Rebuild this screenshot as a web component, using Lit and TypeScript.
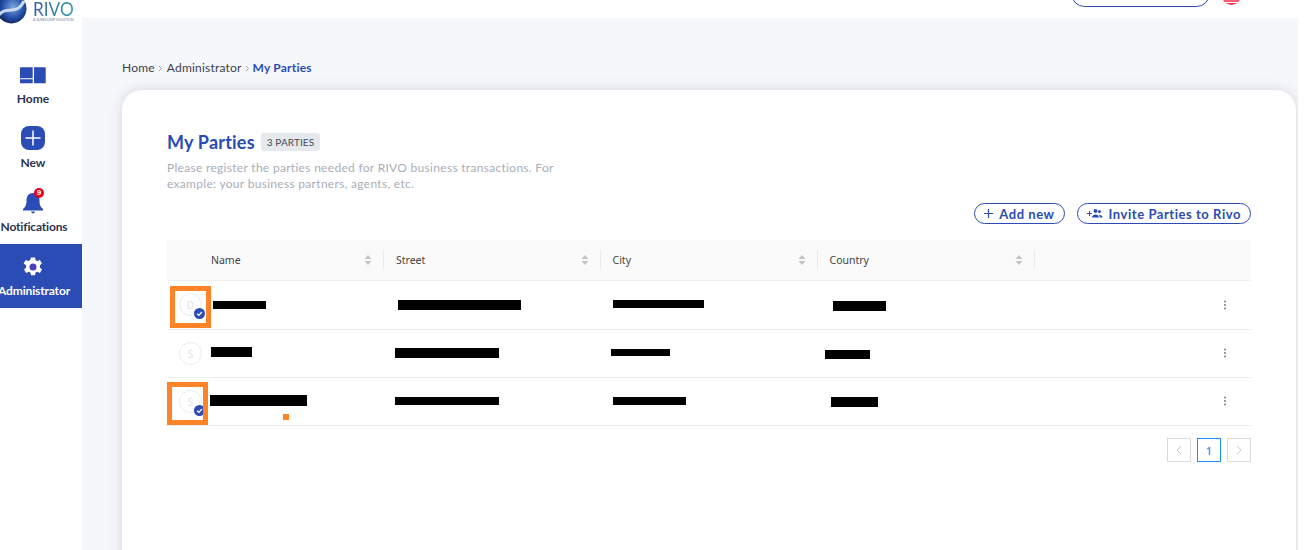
import { LitElement, html, css, svg } from "lit";
import { customElement } from "lit/decorators.js";

const sort = html`<svg class="sort" width="8" height="12" viewBox="0 0 8 12"><path d="M4 1 7.500 5H.5z" fill="#c4c4c4"/><path d="M4 11 .5 7h7z" fill="#c4c4c4"/></svg>`;
const dots = html`<svg class="dots" width="4" height="10" viewBox="0 0 4 10"><circle cx="2" cy="1.500" r="1.100"/><circle cx="2" cy="5" r="1.100"/><circle cx="2" cy="8.500" r="1.100"/></svg>`;
const check = svg`<circle cx="6" cy="6" r="6" fill="#2b4bb5"/><path d="M3.400 6.200 5.300 8 8.700 4.400" fill="none" stroke="#fff" stroke-width="1.400"/>`;
const chevron = html`<svg width="5" height="7" viewBox="0 0 5 7"><path d="M1 1l2.500 2.500L1 6" fill="none" stroke="#9aa0ad"/></svg>`;

type Bar = [number, number, number, number];
interface Row { l: string; tall: boolean; mark: boolean; name: Bar; street: Bar; city: Bar; country: Bar; }
const rows: Row[] = [
  { l: "D", tall: true, mark: true, name: [213, 53, 20, 8], street: [398, 123, 19, 10], city: [613, 91, 19, 8], country: [833, 53, 20, 10] },
  { l: "S", tall: false, mark: false, name: [211, 41, 17, 10], street: [395, 104, 18, 10], city: [611, 59, 19, 7], country: [825, 45, 20, 9] },
  { l: "S", tall: false, mark: true, name: [210, 97, 17, 11], street: [395, 104, 19, 8], city: [613, 73, 19, 8], country: [831, 47, 19, 10] },
];

@customElement("app-root")
export class AppRoot extends LitElement {
  static styles = css`
    :host { display: block; width: 1305px; height: 550px; overflow: hidden; position: relative; background: #fff;
      font-family: "Lato", "Noto Sans", sans-serif; color: #333; }
    .top { height: 18px; position: relative; z-index: 2; background: #fff; }
    .logo { position: absolute; left: -4px; top: -7px; display: block; }
    .brand { position: absolute; left: 33px; top: 0; font-size: 20px; line-height: 17px; font-weight: 400; transform: scaleX(.86); transform-origin: left center;
      background: linear-gradient(90deg, #3d5ca8, #2f9d9f); -webkit-background-clip: text; background-clip: text; color: transparent; }
    .tagline { position: absolute; left: 33px; top: 18px; font-size: 3.500px; line-height: 4px; color: #6f83a6; white-space: nowrap; }
    .pill-top { position: absolute; left: 1071px; top: -20px; width: 137px; height: 25px; border: 1px solid #2b4bb5; border-radius: 14px; }
    .flag { position: absolute; left: 1222px; top: -14px; width: 19px; height: 19px; border-radius: 50%;
      background: linear-gradient(#f0606f 0 16px, #fff 16px 17.500px, #f0404f 17.500px); }
    .body { display: flex; height: 532px; }
    .side { width: 82px; flex: none; background: #fff; padding-top: 34px; box-sizing: border-box; position: relative; z-index: 1; }
    .nav { position: relative; height: 64px; display: flex; flex-direction: column; align-items: center; box-sizing: border-box; padding: 10px 16px 0 0; font-size: 12px; font-weight: 700; color: #2a3350; white-space: nowrap; }
    .nav svg.ico { display: block; height: 26px; margin-bottom: 3px; flex: none; }
    .nav span { line-height: 15px; }
    .nav span.wide { margin-left: 2px; letter-spacing: -.15px; }
    .nav.active { background: #2b4bb5; color: #fff; }
    .badge9 { position: absolute; left: 34px; top: 8px; width: 10px; height: 10px; border-radius: 50%; background: #e8001f; color: #fff; font-size: 8px; line-height: 10px; text-align: center; font-family: "Liberation Sans", sans-serif; }
    .main { width: 1216px; flex: none; background: #f6f7fb; padding: 40px 0 0 40px; box-sizing: border-box; overflow: hidden; }
    .crumbs { display: flex; align-items: center; font-size: 12px; line-height: 20px; height: 20px; letter-spacing: .2px; color: #3a3f4b; }
    .crumbs svg { margin: 0 3.500px; }
    .crumbs b { color: #2b4bb5; font-weight: 700; margin-left: -1px; }
    .card { margin-top: 12px; width: 1174px; height: 520px; background: #fff; border-radius: 20px 20px 0 0; box-shadow: 0 0 14px rgba(60,65,90,.16); padding: 40px 45px 0 45px; box-sizing: border-box; }
    .head { display: flex; align-items: center; gap: 6px; height: 24px; }
    h1 { margin: 0; font-size: 18px; font-weight: 700; color: #2b4bb5; line-height: 24px; letter-spacing: .2px; }
    .badge { background: #e5e8ec; border-radius: 3px; font-size: 10px; line-height: 18px; height: 18px; padding: 0 6px; color: #444b57; letter-spacing: .1px; }
    .desc { margin: 6px 0 0; width: 400px; font-size: 12px; line-height: 16px; color: #a9adb8; letter-spacing: .3px; }
    .actions { display: flex; justify-content: flex-end; gap: 12px; margin-top: 11px; height: 21px; }
    .btn { display: flex; align-items: center; gap: 6px; height: 21px; box-sizing: border-box; border: 1px solid #2b4bb5; border-radius: 11px; padding: 0 9px; font-size: 13px; font-weight: 700; color: #2b4bb5; letter-spacing: .55px; white-space: nowrap; }
    .table { margin-top: 16px; width: 1084px; }
    .grid { display: grid; grid-template-columns: 217px 216.500px 217px 217.500px 1fr; }
    .thead { height: 41px; background: #fafafa; border-bottom: 1px solid #efefef; box-sizing: border-box; font-family: "Noto Sans", sans-serif; font-size: 10.500px; color: #444; }
    .th { display: flex; align-items: center; justify-content: space-between; position: relative; padding: 0 12px; box-sizing: border-box; }
    .th:first-child { padding-left: 44px; }
    .th::after { content: ""; position: absolute; right: 0; top: 10px; height: 19px; width: 1px; background: #e9e9e9; }
    .th.last::after { display: none; }
    .row { height: 48px; border-bottom: 1px solid #ececec; box-sizing: border-box; position: relative; }
    .row.tall { height: 49px; }
    .cell { position: relative; }
    .avatar { position: absolute; left: 12px; top: 12px; width: 23px; height: 23px; box-sizing: border-box; border: 1px solid #e8ebf4; border-radius: 50%; display: flex; align-items: center; justify-content: center; color: #dfe2ee; font-size: 10px; font-family: "Noto Sans", sans-serif; }
    .ok { position: absolute; left: 27px; top: 27px; }
    .redact { position: absolute; background: #000; }
    .more { position: absolute; left: 1056px; top: 18px; }
    .row.tall .more { top: 19px; }
    .dots { fill: #85888f; display: block; }
    .mark { position: absolute; border: 5px solid #ff8427; box-sizing: border-box; pointer-events: none; z-index: 3; }
    .mark.one { left: 170px; top: 286px; width: 41px; height: 42px; }
    .mark.two { left: 167px; top: 382px; width: 41px; height: 43px; }
    .dot { position: absolute; left: 283px; top: 414px; width: 6px; height: 6px; background: #ff8427; z-index: 3; }
    .pager { display: flex; justify-content: flex-end; gap: 6px; margin-top: 12px; }
    .pg { width: 24px; height: 24px; box-sizing: border-box; border: 1px solid #d9d9d9; display: flex; align-items: center; justify-content: center; font-size: 11px; color: #1890ff; font-family: "Noto Sans", sans-serif; font-weight: 500; }
    .pg.on { border-color: #1890ff; }
  `;

  private icon(name: string) {
    if (name === "home") return html`<svg class="ico" width="26" height="26" viewBox="0 0 26 26"><path fill="#2b4bb5" d="M.6 5.300h12.100v11H0V5.900q0-.6.6-.6zM0 17.300h12.700v4H.6q-.6 0-.6-.6zM14 5.300h11.100q.6 0 .6.6v14.800q0 .6-.6.6H14z"/></svg>`;
    if (name === "new") return html`<svg class="ico" width="26" height="26" viewBox="0 0 26 26"><rect x="1" y="0" width="24" height="24" rx="8" fill="#2b4bb5"/><path d="M13 4.500v15M5.500 12h15" stroke="#fff" stroke-width="1.500"/></svg>`;
    if (name === "bell") return html`<svg class="ico" width="26" height="26" viewBox="0 0 26 26"><path fill="#2b4bb5" d="M13 3c4.500 0 6.500 3.500 6.500 7.500 0 4.500 1 6.500 3.500 8.500v1.500H3V19c2.500-2 3.500-4 3.500-8.500C6.500 6.500 8.500 3 13 3z"/><path fill="#2b4bb5" d="M11 21.500h4q-.5 2-2 2t-2-2z"/></svg>`;
    return html`<svg class="ico" width="26" height="26" viewBox="0 0 26 26"><path fill="#fff" d="M11 3.500h4l.6 2.800 1.700.8 2.600-1.200 2.100 3.500-2.100 1.800v2.400l2.100 1.800-2.100 3.500-2.600-1.200-1.700.8-.6 2.800h-4l-.6-2.800-1.700-.8-2.600 1.200-2.100-3.500 2.100-1.800v-2.400L3.600 9.400l2.100-3.500 2.600 1.200 1.700-.8z"/><circle cx="13" cy="13" r="3.500" fill="#4a3fc0"/></svg>`;
  }

  private redact(r: Bar, cellLeft: number) {
    return html`<i class="redact" style="left:${r[0] - cellLeft}px;top:${r[2]}px;width:${r[1]}px;height:${r[3]}px"></i>`;
  }

  render() {
    const cols = [167, 384, 600.5, 817.5];
    return html`
      <div class="top">
        <svg class="logo" width="31" height="31" viewBox="0 0 31 31">
          <defs><radialGradient id="g" cx=".55" cy=".45" r=".6"><stop offset="0" stop-color="#7fa6e0"/><stop offset=".6" stop-color="#2450a8"/><stop offset="1" stop-color="#0d2050"/></radialGradient></defs>
          <circle cx="15.500" cy="15.500" r="15" fill="url(#g)"/><path d="M3 22C10 12 20 24 28 8" stroke="#c9d8f0" stroke-width="3" fill="none"/></svg>
        <div class="brand">RIVO</div>
        <div class="tagline">A SURECOMP SOLUTION</div>
        <div class="pill-top"></div>
        <div class="flag"></div>
      </div>
      <div class="body">
        <nav class="side">
          <div class="nav">${this.icon("home")}<span>Home</span></div>
          <div class="nav">${this.icon("new")}<span>New</span></div>
          <div class="nav">${this.icon("bell")}<span class="wide">Notifications</span><div class="badge9">9</div></div>
          <div class="nav active">${this.icon("gear")}<span class="wide">Administrator</span></div>
        </nav>
        <main class="main">
          <div class="crumbs">Home${chevron}Administrator${chevron}<b>My Parties</b></div>
          <section class="card">
            <div class="head"><h1>My Parties</h1><span class="badge">3 PARTIES</span></div>
            <p class="desc">Please register the parties needed for RIVO business transactions. For example: your business partners, agents, etc.</p>
            <div class="actions">
              <div class="btn"><svg width="9" height="9" viewBox="0 0 9 9"><path d="M4.500 0v9M0 4.500h9" stroke="#2b4bb5" stroke-width="1.200"/></svg>Add new</div>
              <div class="btn"><svg width="16" height="11" viewBox="0 0 16 11" fill="#2b4bb5"><path d="M0 5h2V3h1v2h2v1H3v2H2V6H0z"/><circle cx="8.500" cy="3" r="2"/><circle cx="12.500" cy="3.500" r="1.500"/><path d="M5 9.500c0-2 2-3 3.500-3s3.500 1 3.500 3zM12.800 9.500c0-1-.4-2-1-2.500 2-.4 3.700.8 3.700 2.500z"/></svg>Invite Parties to Rivo</div>
            </div>
            <div class="table">
              <div class="grid thead">
                <div class="th"><span>Name</span>${sort}</div>
                <div class="th"><span>Street</span>${sort}</div>
                <div class="th"><span>City</span>${sort}</div>
                <div class="th"><span>Country</span>${sort}</div>
                <div class="th last"></div>
              </div>
              ${rows.map((r) => html`
                <div class="grid row ${r.tall ? "tall" : ""}">
                  <div class="cell"><div class="avatar">${r.l}</div>
                    ${r.mark ? html`<svg class="ok" width="11" height="11" viewBox="0 0 12 12">${check}</svg>` : ""}
                    ${this.redact(r.name, cols[0])}</div>
                  <div class="cell">${this.redact(r.street, cols[1])}</div>
                  <div class="cell">${this.redact(r.city, cols[2])}</div>
                  <div class="cell">${this.redact(r.country, cols[3])}</div>
                  <div class="more">${dots}</div>
                </div>`)}
              <div class="pager">
                <div class="pg"><svg width="6" height="10" viewBox="0 0 6 10"><path d="M5 1 1 5l4 4" fill="none" stroke="#c8c8c8"/></svg></div>
                <div class="pg on">1</div>
                <div class="pg"><svg width="6" height="10" viewBox="0 0 6 10"><path d="M1 1l4 4-4 4" fill="none" stroke="#c8c8c8"/></svg></div>
              </div>
            </div>
          </section>
        </main>
      </div>
      <div class="mark one"></div>
      <div class="mark two"></div>
      <div class="dot"></div>
    `;
  }
}
